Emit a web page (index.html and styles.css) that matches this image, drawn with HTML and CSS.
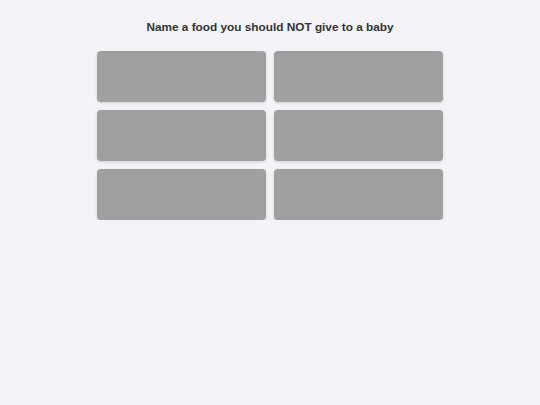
FILE: index.html
```html
<!DOCTYPE html>
<html lang="en">
<head>
<meta charset="utf-8">
<title>Survey board</title>
<link rel="stylesheet" href="styles.css">
</head>
<body>
  <main class="board">
    <h1 class="question">Name a food you should NOT give to a baby</h1>
    <div class="answers">
      <div class="answer"></div>
      <div class="answer"></div>
      <div class="answer"></div>
      <div class="answer"></div>
      <div class="answer"></div>
      <div class="answer"></div>
    </div>
  </main>
</body>
</html>
```
FILE: styles.css
```css
html, body {
  margin: 0;
  padding: 0;
  background: #f3f3f8;
}

body {
  font-family: "Liberation Sans", Arial, sans-serif;
  color: #333333;
}

.board {
  width: 346px;
  margin: 0 auto;
  padding-top: 20px;
}

.question {
  margin: 0 0 16px;
  font-size: 11.8px;
  line-height: 15px;
  font-weight: 700;
  text-align: center;
}

.answers {
  display: grid;
  grid-template-columns: 1fr 1fr;
  gap: 8px;
}

.answer {
  height: 51px;
  background: #a0a0a0;
  border-radius: 4px;
  box-shadow: 0 1px 3px rgba(0, 0, 0, 0.15);
}
```
